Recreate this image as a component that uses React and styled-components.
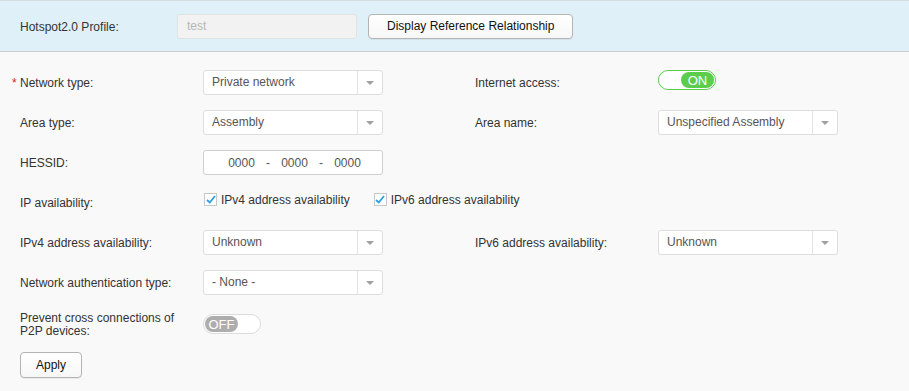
import React from "react";
import styled, { createGlobalStyle } from "styled-components";

const Global = createGlobalStyle`
  html, body { margin: 0; padding: 0; background: #f9f9f9; }
  body { font-family: "Liberation Sans", Arial, sans-serif; font-size: 12px; color: #333; }
  * { box-sizing: border-box; }
`;

const Page = styled.div`
  width: 909px;
  height: 391px;
  background: #f9f9f9;
`;

const Header = styled.div`
  display: flex;
  align-items: center;
  height: 52px;
  padding: 0 0 0 20px;
  background: #e0f0f9;
  border-top: 1px solid #d6dde2;
  border-bottom: 1px solid #c9cdd0;
`;

const HeaderLabel = styled.div`
  width: 157px;
  color: #333;
  padding-top: 1px;
`;

const DisabledInput = styled.div`
  width: 180px;
  height: 25px;
  border: 1px solid #e2e2e2;
  border-radius: 3px;
  background: #f2f2f2;
  color: #b8b8b8;
  padding-left: 9px;
  display: flex;
  align-items: center;
`;

const Button = styled.button`
  font-family: "Liberation Sans", Arial, sans-serif;
  font-size: 12px;
  color: #111;
  height: ${(p) => p.$h || 25}px;
  padding: 0 ${(p) => p.$px || 14}px;
  margin-left: ${(p) => p.$ml || 0}px;
  border: 1px solid #b4b4b4;
  border-radius: 4px;
  background: linear-gradient(#ffffff, #f7f7f7);
  box-shadow: 0 1px 0 rgba(0, 0, 0, 0.06);
`;

const Form = styled.div`
  padding: 18px 0 0 20px;
`;

const Grid = styled.div`
  display: grid;
  grid-template-columns: 183px 180px 92px 183px 180px;
  grid-auto-rows: minmax(25px, auto);
  row-gap: 15px;
  align-items: center;
`;

const Label = styled.div`
  position: relative;
  color: #333;
  line-height: ${(p) => (p.$multi ? "13px" : "14px")};
  padding-right: 12px;
  align-self: ${(p) => (p.$multi ? "start" : "center")};
  margin-top: ${(p) => (p.$multi ? "2px" : "0")};
`;

const Required = styled.span`
  position: absolute;
  left: -8px;
  top: 0;
  color: #e02020;
  font-size: 12px;
`;

const SelectBox = styled.div`
  display: flex;
  height: 25px;
  background: #fff;
  border: 1px solid #dedede;
  border-radius: 3px;
`;

const SelectValue = styled.div`
  flex: 1;
  display: flex;
  align-items: center;
  padding-left: 8px;
  padding-bottom: 2px;
  color: #555;
`;

const SelectArrow = styled.div`
  width: 25px;
  border-left: 1px solid #e3e3e3;
  display: flex;
  align-items: center;
  justify-content: center;
  &::after {
    content: "";
    border-left: 4px solid transparent;
    border-right: 4px solid transparent;
    border-top: 4px solid #a0a0a0;
  }
`;

const Spacer = styled.div`
  grid-column: ${(p) => p.$span || "auto"};
`;

const Toggle = styled.div`
  width: 58px;
  height: 20px;
  border-radius: 10px;
  border: 1px solid ${(p) => (p.$on ? "#5ccc4c" : "#dcdcdc")};
  background: #fff;
  display: flex;
  justify-content: ${(p) => (p.$on ? "flex-end" : "flex-start")};
  align-items: center;
  padding: 1px;
  align-self: ${(p) => (p.$top ? "start" : "center")};
`;

const Knob = styled.div`
  width: 33px;
  height: 16px;
  border-radius: 8px;
  background: ${(p) => (p.$on ? "#5ccc4c" : "#adadad")};
  color: #fff;
  font-size: 13px;
  display: flex;
  align-items: center;
  justify-content: center;
  line-height: 1;
`;

const HessidBox = styled.div`
  display: flex;
  align-items: center;
  height: 25px;
  background: #fff;
  border: 1px solid #cfcfcf;
  border-radius: 3px;
  padding-left: 16px;
  color: #555;
`;

const Segment = styled.span`
  width: 43px;
  text-align: center;
`;

const Dash = styled.span`
  width: 10px;
  text-align: center;
`;

const CheckGroup = styled.div`
  grid-column: 2 / span 3;
  display: flex;
  align-items: center;
  gap: 23px;
  margin-top: -6px;
`;

const CheckItem = styled.label`
  display: flex;
  align-items: center;
  gap: 4px;
  color: #333;
`;

const CheckBox = styled.span`
  width: 13px;
  height: 13px;
  border: 1px solid #c8c8c8;
  background: #fff;
  display: flex;
  align-items: center;
  justify-content: center;
  margin-left: 1px;
`;

const Actions = styled.div`
  padding-top: 14px;
`;

function Select({ value }) {
  return (
    <SelectBox>
      <SelectValue>{value}</SelectValue>
      <SelectArrow />
    </SelectBox>
  );
}

function Check({ children }) {
  return (
    <CheckItem>
      <CheckBox>
        <svg width="10" height="9" viewBox="0 0 10 9">
          <path d="M1 5 L3.8 7.5 L9 1" fill="none" stroke="#2a9fe6" strokeWidth="1.8" />
        </svg>
      </CheckBox>
      {children}
    </CheckItem>
  );
}

export default function App() {
  return (
    <Page>
      <Global />
      <Header>
        <HeaderLabel>Hotspot2.0 Profile:</HeaderLabel>
        <DisabledInput>test</DisabledInput>
        <Button $ml={11} $px={18}>Display Reference Relationship</Button>
      </Header>
      <Form>
        <Grid>
          <Label>
            <Required>*</Required>Network type:
          </Label>
          <Select value="Private network" />
          <Spacer />
          <Label>Internet access:</Label>
          <Toggle $on $top>
            <Knob $on>ON</Knob>
          </Toggle>

          <Label>Area type:</Label>
          <Select value="Assembly" />
          <Spacer />
          <Label>Area name:</Label>
          <Select value="Unspecified Assembly" />

          <Label>HESSID:</Label>
          <HessidBox>
            <Segment>0000</Segment>
            <Dash>-</Dash>
            <Segment>0000</Segment>
            <Dash>-</Dash>
            <Segment>0000</Segment>
          </HessidBox>
          <Spacer $span="3 / span 3" />

          <Label>IP availability:</Label>
          <CheckGroup>
            <Check>IPv4 address availability</Check>
            <Check>IPv6 address availability</Check>
          </CheckGroup>
          <Spacer />

          <Label>IPv4 address availability:</Label>
          <Select value="Unknown" />
          <Spacer />
          <Label>IPv6 address availability:</Label>
          <Select value="Unknown" />

          <Label>Network authentication type:</Label>
          <Select value="- None -" />
          <Spacer $span="3 / span 3" />

          <Label $multi>Prevent cross connections of P2P devices:</Label>
          <div>
            <Toggle $top>
              <Knob>OFF</Knob>
            </Toggle>
          </div>
          <Spacer $span="3 / span 3" />
        </Grid>
        <Actions>
          <Button $h={26} $px={15}>Apply</Button>
        </Actions>
      </Form>
    </Page>
  );
}
